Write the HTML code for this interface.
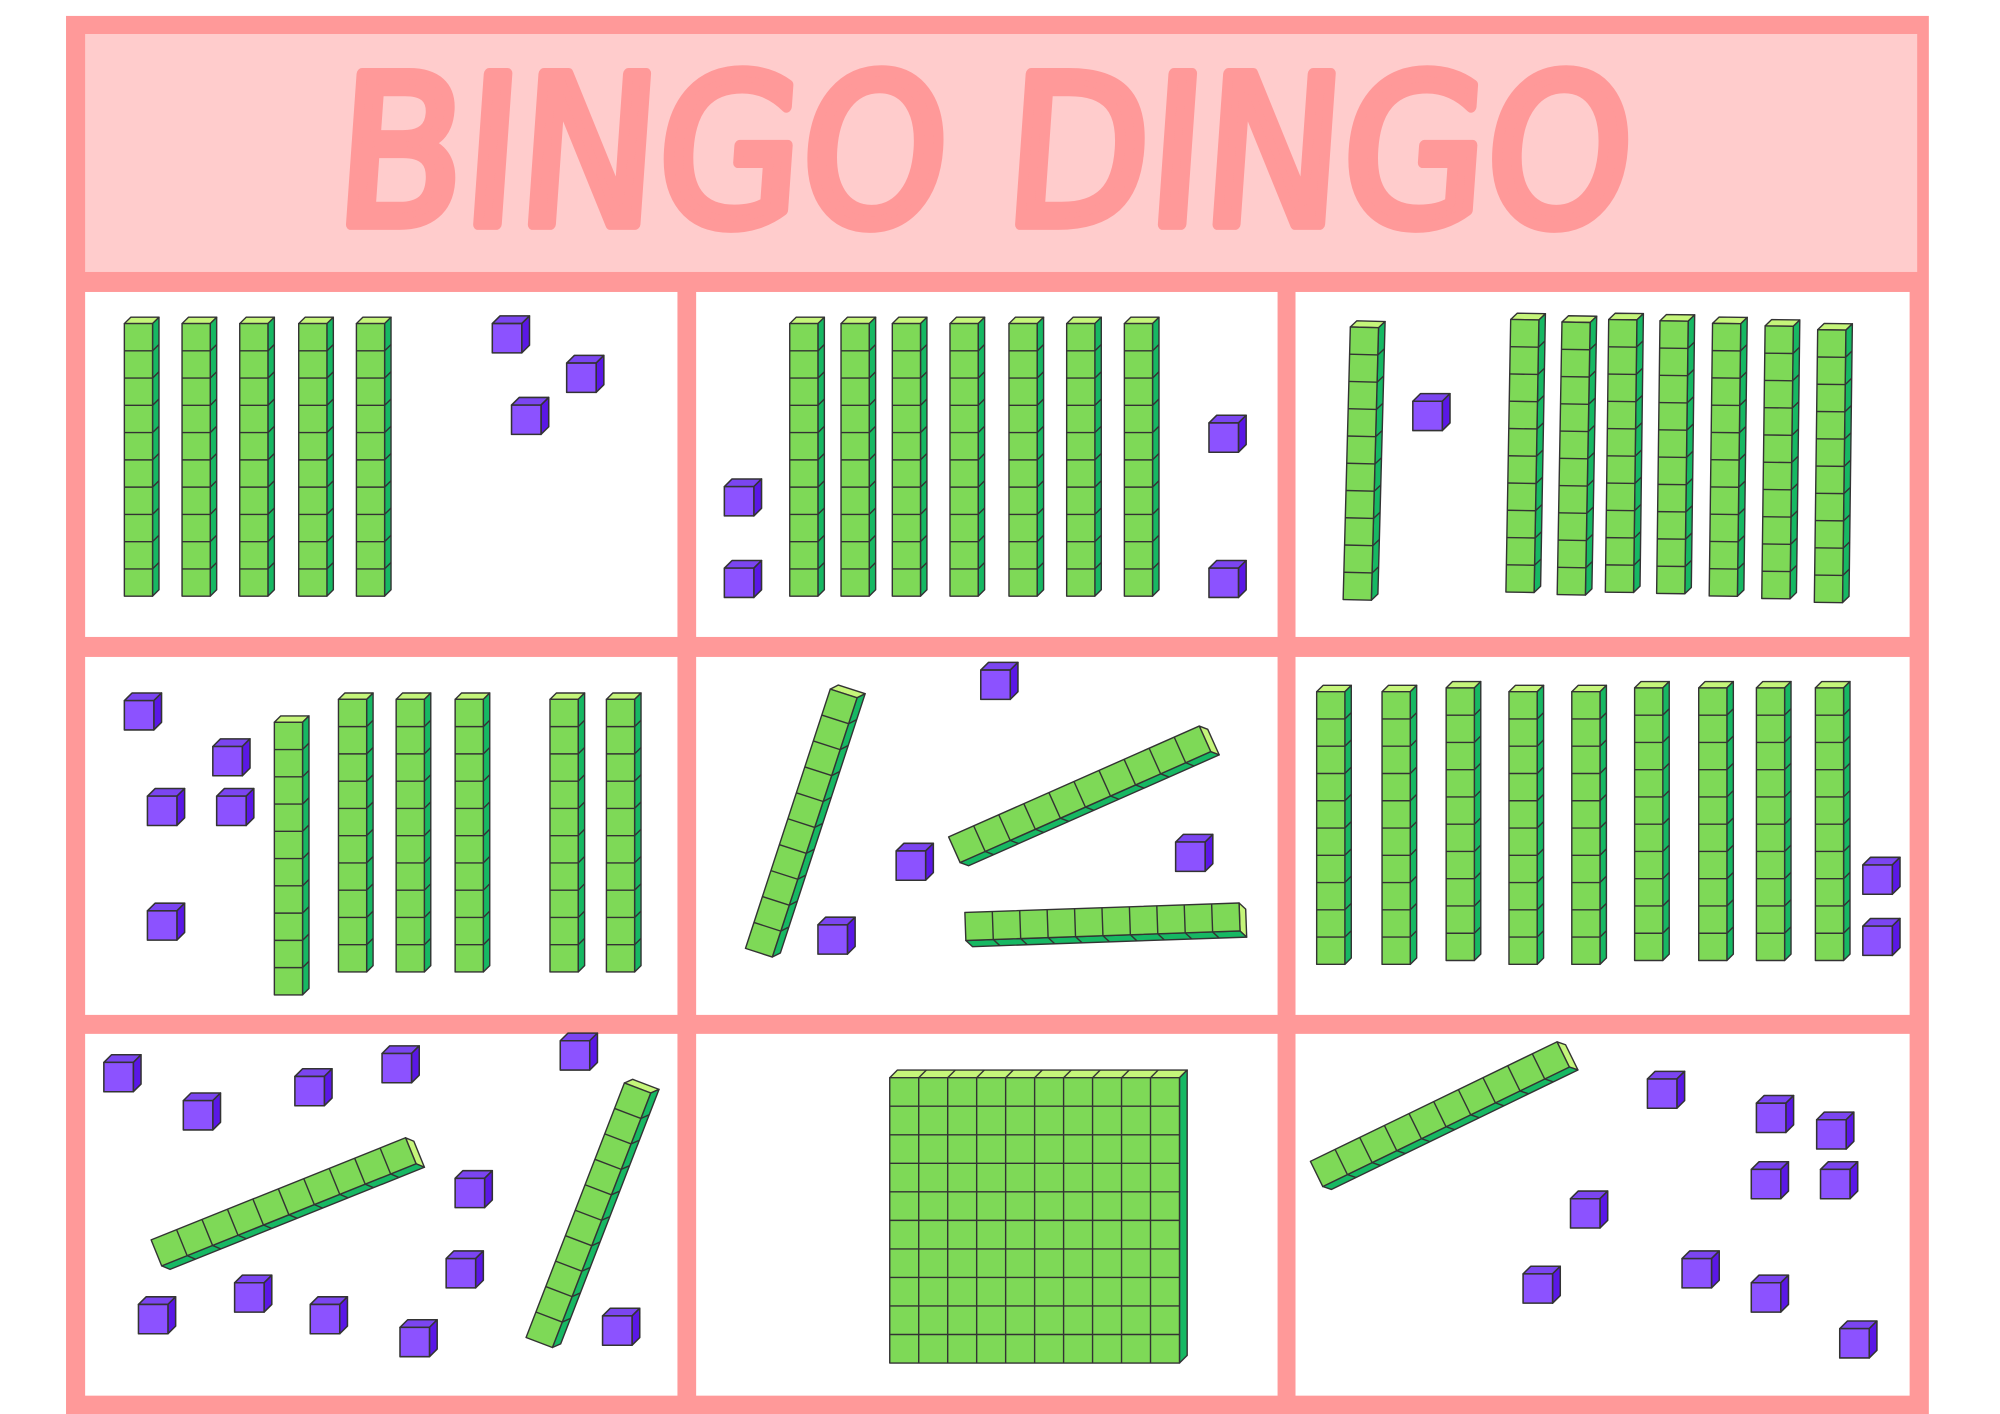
<!DOCTYPE html>
<html><head><meta charset="utf-8"><style>
html,body{margin:0;padding:0;background:#fff;width:2000px;height:1414px;overflow:hidden}
svg{display:block}
</style></head><body>
<svg width="2000" height="1414" viewBox="0 0 1560 1110" preserveAspectRatio="none" xmlns="http://www.w3.org/2000/svg">
<defs>
<g id="rod" stroke="#333" stroke-width="1.1" stroke-linejoin="round">
<polygon points="0,5 5,0 27,0 22,5" fill="#C5F57A"/>
<polygon points="22,5 27,0 27,214 22,219" fill="#16B863"/>
<rect x="0" y="5" width="22" height="214" fill="#7ED957"/>
<path d="M0,26.4H22M0,47.8H22M0,69.2H22M0,90.6H22M0,112H22M0,133.4H22M0,154.8H22M0,176.2H22M0,197.6H22M22,26.4L27,21.4M22,47.8L27,42.8M22,69.2L27,64.2M22,90.6L27,85.6M22,112L27,107M22,133.4L27,128.4M22,154.8L27,149.8M22,176.2L27,171.2M22,197.6L27,192.6" fill="none"/>
</g>
<g id="cube" stroke="#333" stroke-width="1.2" stroke-linejoin="round">
<polygon points="0,6 6,0 29,0 23,6" fill="#7B45F0"/>
<polygon points="23,6 29,0 29,23 23,29" fill="#5A17E6"/>
<rect x="0" y="6" width="23" height="23" fill="#8C52FF"/>
</g>
</defs>
<rect x="51.5" y="12.5" width="1453" height="1098" fill="#FF9999"/>
<rect x="66.4" y="26.7" width="1429" height="186.8" fill="#FFCCCC"/>
<g fill="#fff">
<rect x="66.4" y="229.2" width="462" height="270.8"/>
<rect x="543" y="229.2" width="453.5" height="270.8"/>
<rect x="1010.5" y="229.2" width="479" height="270.8"/>
<rect x="66.4" y="515.7" width="462" height="281"/>
<rect x="543" y="515.7" width="453.5" height="281"/>
<rect x="1010.5" y="515.7" width="479" height="281"/>
<rect x="66.4" y="811.6" width="462" height="284"/>
<rect x="543" y="811.6" width="453.5" height="284"/>
<rect x="1010.5" y="811.6" width="479" height="284"/>
</g>
<g transform="translate(776,0) skewX(-4) translate(-776,0)">
<text x="272" y="176" textLength="1010" lengthAdjust="spacingAndGlyphs" font-family="'DejaVu Sans','Liberation Sans',sans-serif" font-size="162" fill="#FF9999" stroke="#FF9999" stroke-width="9" stroke-linejoin="round" stroke-linecap="round">BINGO DINGO</text>
</g>

<use href="#rod" x="97" y="249"/><use href="#rod" x="142" y="249"/><use href="#rod" x="187" y="249"/><use href="#rod" x="233" y="249"/><use href="#rod" x="278" y="249"/>
<use href="#cube" x="384" y="248"/><use href="#cube" x="442" y="279"/><use href="#cube" x="399" y="312"/>
<use href="#rod" x="616" y="249"/><use href="#rod" x="656" y="249"/><use href="#rod" x="696" y="249"/><use href="#rod" x="741" y="249"/><use href="#rod" x="787" y="249"/><use href="#rod" x="832" y="249"/><use href="#rod" x="877" y="249"/>
<use href="#cube" x="565" y="376"/><use href="#cube" x="565" y="440"/><use href="#cube" x="943" y="326"/><use href="#cube" x="943" y="440"/>
<use href="#rod" transform="translate(1064,362) rotate(1.5) translate(-13.5,-110)"/>
<use href="#cube" x="1102" y="309"/>
<use href="#rod" transform="translate(1190,356) rotate(1) translate(-13.5,-110)"/>
<use href="#rod" transform="translate(1230,358) rotate(1) translate(-13.5,-110)"/>
<use href="#rod" transform="translate(1267,356) rotate(0.7) translate(-13.5,-110)"/>
<use href="#rod" transform="translate(1307,357) rotate(0.7) translate(-13.5,-110)"/>
<use href="#rod" transform="translate(1348,359) rotate(0.7) translate(-13.5,-110)"/>
<use href="#rod" transform="translate(1389,361) rotate(0.7) translate(-13.5,-110)"/>
<use href="#rod" transform="translate(1430,364) rotate(0.7) translate(-13.5,-110)"/>
<use href="#cube" x="97" y="544"/><use href="#cube" x="166" y="580"/><use href="#cube" x="115" y="619"/><use href="#cube" x="169" y="619"/><use href="#cube" x="115" y="709"/>
<use href="#rod" x="214" y="562"/><use href="#rod" x="264" y="544"/><use href="#rod" x="309" y="544"/><use href="#rod" x="355" y="544"/><use href="#rod" x="429" y="544"/><use href="#rod" x="473" y="544"/>
<use href="#rod" transform="translate(628,645) rotate(18) translate(-13.5,-110)"/>
<use href="#rod" transform="translate(845,625) rotate(66) translate(-13.5,-110)"/>
<use href="#rod" transform="translate(862,726) rotate(88) translate(-13.5,-110)"/>
<use href="#cube" x="765" y="520"/><use href="#cube" x="699" y="662"/><use href="#cube" x="917" y="655"/><use href="#cube" x="638" y="720"/>
<use href="#rod" x="1027" y="538"/><use href="#rod" x="1078" y="538"/><use href="#rod" x="1128" y="535"/><use href="#rod" x="1177" y="538"/><use href="#rod" x="1226" y="538"/><use href="#rod" x="1275" y="535"/><use href="#rod" x="1325" y="535"/><use href="#rod" x="1370" y="535"/><use href="#rod" x="1416" y="535"/>
<use href="#cube" x="1453" y="673"/><use href="#cube" x="1453" y="721"/>
<use href="#cube" x="81" y="828"/><use href="#cube" x="143" y="858"/><use href="#cube" x="230" y="839"/><use href="#cube" x="298" y="821"/><use href="#cube" x="437" y="811"/><use href="#cube" x="355" y="919"/><use href="#cube" x="348" y="982"/><use href="#cube" x="108" y="1018"/><use href="#cube" x="183" y="1001"/><use href="#cube" x="242" y="1018"/><use href="#cube" x="312" y="1036"/><use href="#cube" x="470" y="1027"/>
<use href="#rod" transform="translate(224,945) rotate(68) translate(-13.5,-110)"/>
<use href="#rod" transform="translate(462,953) rotate(21) translate(-13.5,-110)"/>
<g stroke="#333" stroke-width="1.1" stroke-linejoin="round">
<polygon points="694,846 700,840 926,840 920,846" fill="#C5F57A"/>
<polygon points="920,846 926,840 926,1064 920,1070" fill="#16B863"/>
<rect x="694" y="846" width="226" height="224" fill="#7ED957"/>
<path fill="none" d="M716.6,846V1070M739.2,846V1070M761.8,846V1070M784.4,846V1070M807,846V1070M829.6,846V1070M852.2,846V1070M874.8,846V1070M897.4,846V1070M694,868.4H920M694,890.8H920M694,913.2H920M694,935.6H920M694,958H920M694,980.4H920M694,1002.8H920M694,1025.2H920M694,1047.6H920M716.6,846L722.6,840M739.2,846L745.2,840M761.8,846L767.8,840M784.4,846L790.4,840M807,846L813,840M829.6,846L835.6,840M852.2,846L858.2,840M874.8,846L880.8,840M897.4,846L903.4,840"/>
</g>
<use href="#rod" transform="translate(1126,876) rotate(64) translate(-13.5,-110)"/>
<use href="#cube" x="1285" y="841"/><use href="#cube" x="1370" y="860"/><use href="#cube" x="1417" y="873"/><use href="#cube" x="1366" y="912"/><use href="#cube" x="1420" y="912"/><use href="#cube" x="1225" y="935"/><use href="#cube" x="1188" y="994"/><use href="#cube" x="1312" y="982"/><use href="#cube" x="1366" y="1001"/><use href="#cube" x="1435" y="1037"/>
</svg>
</body></html>
